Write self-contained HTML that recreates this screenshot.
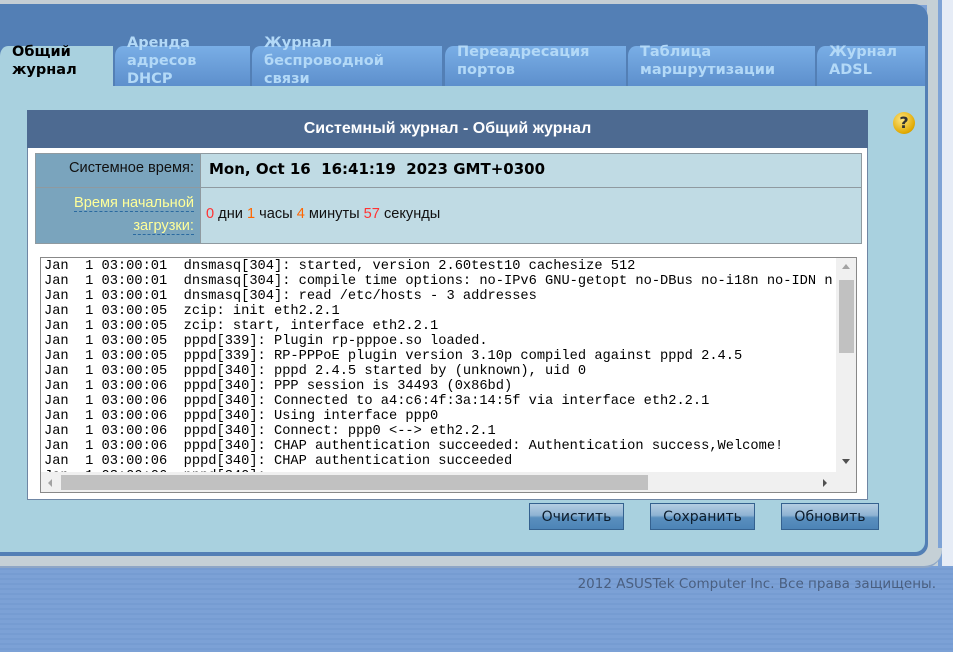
<!DOCTYPE html>
<html><head><meta charset="utf-8"><style>
*{margin:0;padding:0;box-sizing:border-box}
body{width:953px;height:652px;overflow:hidden;position:relative;font-family:"Liberation Sans","DejaVu Sans",sans-serif;
background:repeating-linear-gradient(180deg,#7ca1d6 0,#7ca1d6 3px,#769cd2 3px,#769cd2 5px);}
.a{position:absolute}
.tab{position:absolute;top:46px;height:40px;background:linear-gradient(#79aee6,#5d8fcc);border-top-left-radius:8px 10px;
font-family:"DejaVu Sans",sans-serif;font-weight:bold;font-size:14.5px;line-height:18px;color:#b3d9f7;padding-left:12px;padding-bottom:10px;display:flex;align-items:center;white-space:nowrap}
.log{font-family:"Liberation Mono",monospace;font-size:13.7px;line-height:15px;white-space:pre;color:#000}
.btn{position:absolute;top:503px;height:27px;border:1px solid #34618f;background:linear-gradient(#b4cde2,#8fb3d3 45%,#5a8fbe 55%,#4c84b6);
font-family:"DejaVu Sans",sans-serif;font-size:14px;color:#0c1c2c;text-align:center;line-height:26px}
</style></head><body>
<div class="a" style="left:0;top:0;width:953px;height:5px;background:#c5ced4"></div>
<div class="a" style="left:927px;top:0;width:26px;height:566px;background:#c5d0d6"></div>
<div class="a" style="left:938px;top:0;width:4px;height:566px;background:#7ea3d6"></div>
<div class="a" style="left:942px;top:0;width:11px;height:566px;background:#e6ecf6"></div>
<div class="a" style="left:0;top:548px;width:942px;height:20px;background:#c5d0d6;border-bottom:2px solid #8ea6c6;border-bottom-right-radius:18px"></div>
<div class="a" style="left:0;top:4px;width:928px;height:552px;background:#537fb5;border-top-right-radius:14px;border-bottom-right-radius:12px"></div>
<div class="a" style="left:0;top:86px;width:925px;height:466px;background:#a9d1df;border-bottom-right-radius:10px"></div>
<div class="tab" style="left:0;width:113px;background:#a9d1df;color:#000;padding-left:12px">Общий<br>журнал</div>
<div class="tab" style="left:115px;width:135px">Аренда<br>адресов<br>DHCP</div>
<div class="tab" style="left:252px;width:190px">Журнал<br>беспроводной<br>связи</div>
<div class="tab" style="left:445px;width:181px">Переадресация<br>портов</div>
<div class="tab" style="left:628px;width:187px">Таблица<br>маршрутизации</div>
<div class="tab" style="left:817px;width:108px">Журнал<br>ADSL</div>
<div class="a" style="left:893px;top:112px;width:22px;height:22px;border-radius:50%;background:radial-gradient(circle at 40% 35%,#ffe680,#e0a800 70%,#9a6f00);color:#333;font:bold 16px 'DejaVu Sans',sans-serif;text-align:center;line-height:22px">?</div>
<div class="a" style="left:27px;top:110px;width:841px;height:38px;background:#4d6a91;color:#fff;font-weight:bold;font-size:16px;text-align:center;line-height:38px">Системный журнал - Общий журнал</div>
<div class="a" style="left:27px;top:148px;width:841px;height:352px;background:#fff;border:1px solid #6f86a4;border-top:none"></div>
<div class="a" style="left:35px;top:153px;width:827px;height:91px;border:1px solid #8f9aa0;background:#c0dbe4"></div>
<div class="a" style="left:36px;top:154px;width:165px;height:89px;background:#7aa4bd;border-right:1px solid #8f9aa0"></div>
<div class="a" style="left:36px;top:187px;width:825px;height:1px;background:#8f9aa0"></div>
<div class="a" style="left:30px;top:160px;width:164px;text-align:right;font-size:14.6px;color:#111">Системное время:</div>
<div class="a" style="left:209px;top:160px;font-family:'DejaVu Sans',sans-serif;font-weight:bold;font-size:15px;color:#000;white-space:pre">Mon, Oct 16  16:41:19  2023 GMT+0300</div>
<div class="a" style="left:30px;top:192px;width:164px;text-align:right;font-size:14.6px;line-height:23px;color:#ffff9a"><span style="border-bottom:1px dashed #2a6aa0">Время начальной</span><br><span style="border-bottom:1px dashed #2a6aa0">загрузки:</span></div>
<div class="a" style="left:206px;top:206px;font-size:14.6px;color:#111"><span style="color:#f33">0</span> дни <span style="color:#f60">1</span> часы <span style="color:#f60">4</span> минуты <span style="color:#f33">57</span> секунды</div>
<div class="a" style="left:40px;top:257px;width:817px;height:236px;border:1px solid #888;overflow:hidden;background:#fff">
<div class="log" style="position:absolute;left:3px;top:1px">Jan  1 03:00:01  dnsmasq[304]: started, version 2.60test10 cachesize 512
Jan  1 03:00:01  dnsmasq[304]: compile time options: no-IPv6 GNU-getopt no-DBus no-i18n no-IDN n
Jan  1 03:00:01  dnsmasq[304]: read /etc/hosts - 3 addresses
Jan  1 03:00:05  zcip: init eth2.2.1
Jan  1 03:00:05  zcip: start, interface eth2.2.1
Jan  1 03:00:05  pppd[339]: Plugin rp-pppoe.so loaded.
Jan  1 03:00:05  pppd[339]: RP-PPPoE plugin version 3.10p compiled against pppd 2.4.5
Jan  1 03:00:05  pppd[340]: pppd 2.4.5 started by (unknown), uid 0
Jan  1 03:00:06  pppd[340]: PPP session is 34493 (0x86bd)
Jan  1 03:00:06  pppd[340]: Connected to a4:c6:4f:3a:14:5f via interface eth2.2.1
Jan  1 03:00:06  pppd[340]: Using interface ppp0
Jan  1 03:00:06  pppd[340]: Connect: ppp0 &lt;--&gt; eth2.2.1
Jan  1 03:00:06  pppd[340]: CHAP authentication succeeded: Authentication success,Welcome!
Jan  1 03:00:06  pppd[340]: CHAP authentication succeeded
Jan  1 03:00:06  pppd[340]: ...</div>
<div class="a" style="left:795px;top:0;width:21px;height:214px;background:#f0f0f0"></div>
<div class="a" style="left:798px;top:22px;width:15px;height:73px;background:#c1c1c1"></div>
<div class="a" style="left:801px;top:6px;width:0;height:0;border:4px solid transparent;border-bottom:5px solid #a3a3a3;border-top:none"></div>
<div class="a" style="left:801px;top:201px;width:0;height:0;border:4px solid transparent;border-top:5px solid #505050;border-bottom:none"></div>
<div class="a" style="left:0;top:214px;width:816px;height:21px;background:#f0f0f0"></div>
<div class="a" style="left:20px;top:217px;width:587px;height:15px;background:#c1c1c1"></div>
<div class="a" style="left:7px;top:221px;width:0;height:0;border:4px solid transparent;border-right:4px solid #a3a3a3;border-left:none"></div>
<div class="a" style="left:782px;top:221px;width:0;height:0;border:4px solid transparent;border-left:4px solid #505050;border-right:none"></div>
</div>
<div class="btn" style="left:529px;width:95px">Очистить</div>
<div class="btn" style="left:650px;width:105px">Сохранить</div>
<div class="btn" style="left:781px;width:98px">Обновить</div>
<div class="a" style="right:17px;top:576px;font-family:'DejaVu Sans',sans-serif;font-size:13.5px;color:#4a5f80;white-space:nowrap">2012 ASUSTek Computer Inc. Все права защищены.</div>
</body></html>
